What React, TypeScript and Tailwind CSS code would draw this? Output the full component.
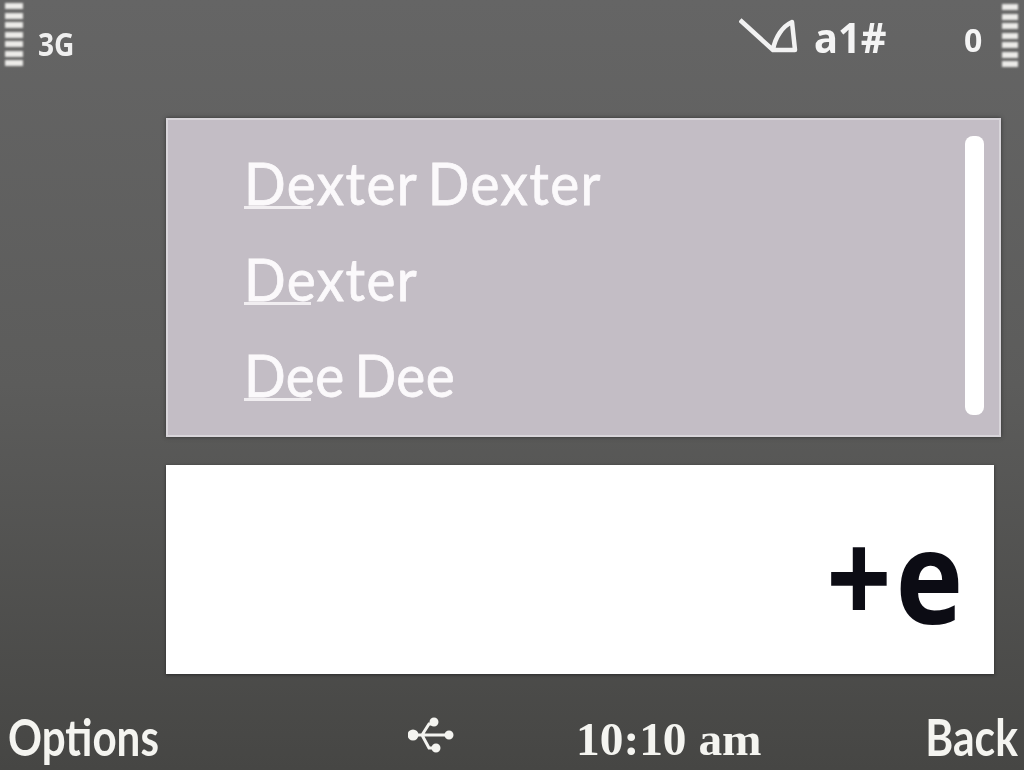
const Bars = ({ className }: { className: string }) => (
  <div className={`flex flex-col gap-[3.5px] ${className}`}>
    {[0, 1, 2, 3, 4, 5, 6].map((i) => (
      <div key={i} className="h-[6px] w-full bg-[#ecebe8] blur-[0.8px]" />
    ))}
  </div>
);

const Row = ({ text, tight }: { text: string; tight?: boolean }) => (
  <div className="relative flex h-[96px] items-center pb-[3px]">
    <span
      className={`origin-left scale-x-[0.93] whitespace-nowrap text-[59px] leading-none text-[#fbf9fb] font-['Lato',sans-serif] blur-[0.6px] [word-spacing:-5px] [-webkit-text-stroke:0.8px_#fbf9fb] ${
        tight ? "tracking-[0.5px]" : "tracking-[1.5px]"
      }`}
    >
      {text}
    </span>
    <div className="absolute left-0 top-[70px] h-[3px] w-[67px] bg-[#f1eef1] blur-[0.5px]" />
  </div>
);

export default function App() {
  return (
    <div className="flex h-[770px] w-[1024px] flex-col overflow-hidden bg-gradient-to-b from-[#656565] via-[#5c5c5b] to-[#464644] font-['Noto_Sans',sans-serif]">
      <div className="flex h-[118px] shrink-0 items-start">
        <Bars className="ml-[5px] mt-[3px] w-[18px]" />
        <span className="ml-[15px] mt-[26px] origin-left scale-x-[0.88] text-[32px] font-bold leading-[36px] text-[#efefef] blur-[0.6px]">
          3G
        </span>
        <svg viewBox="0 0 60 40" className="ml-auto mt-[17px] h-[40px] w-[60px] blur-[0.5px]" fill="none" stroke="#f2f2f2" strokeWidth="4.5" strokeLinejoin="round">
          <path d="M1 3 L 34 33 L 56 33 L 53 5 C 44 9 36 20 34 33" />
        </svg>
        <span className="ml-[15px] mt-[14px] w-[72px] origin-left scale-x-[0.95] whitespace-nowrap text-[42px] font-bold leading-[46px] text-[#f4f4f4] blur-[0.6px]">
          a1#
        </span>
        <span className="ml-[78px] mt-[21px] w-[18px] origin-left text-[32px] font-bold leading-[38px] text-[#f4f4f4] blur-[0.6px]">
          0
        </span>
        <Bars className="ml-[20px] mr-[6px] mt-[4px] w-[16px]" />
      </div>

      <div className="ml-[166px] flex h-[319px] w-[835px] shrink-0 border-2 border-[#d8d5da] bg-[#c3bdc5] pl-[76px] pr-[15px] pt-[16px] shadow-[0_0_4px_#333]">
        <div className="flex-1">
          <Row text="Dexter Dexter" />
          <Row text="Dexter" />
          <Row text="Dee Dee" tight />
        </div>
        <div className="h-[279px] w-[19px] rounded-[8px] bg-white" />
      </div>

      <div className="ml-[166px] mt-[28px] flex h-[209px] w-[828px] shrink-0 items-end justify-end bg-white pb-[50px] pr-[27px] shadow-[0_1px_3px_#2a2a2a]">
        <span className="origin-right scale-x-[0.88] text-[130px] font-bold leading-[100px] tracking-[4px] text-[#0c0c14] blur-[0.6px]">
          +e
        </span>
      </div>

      <div className="flex min-h-0 flex-1 items-start pt-[34px] text-[#f4f4f0]">
        <span className="ml-[8px] w-[360px] origin-left scale-x-[0.826] text-[51px] leading-[58px] font-['Lato',sans-serif] font-bold blur-[0.6px]">
          Options
        </span>
        <svg viewBox="0 0 46 36" className="ml-[40px] mt-[9px] h-[36px] w-[46px] blur-[0.4px]" fill="#f4f4f0" stroke="#f4f4f0" strokeWidth="3">
          <circle cx="5" cy="18" r="4" />
          <circle cx="26" cy="5" r="3" />
          <circle cx="28" cy="31" r="3" />
          <circle cx="41" cy="18" r="3" />
          <path d="M5 18 H42 M14 18 L21 7 H25 M14 18 L21 31 H27" fill="none" />
        </svg>
        <span className="ml-[122px] mt-[6px] w-[300px] origin-left scale-x-[1.03] whitespace-nowrap text-[46px] font-bold leading-[52px] font-['Liberation_Serif',serif] blur-[0.6px]">
          10:10 am
        </span>
        <span className="ml-auto mr-[6px] origin-right scale-x-[0.835] text-[51px] leading-[58px] font-['Lato',sans-serif] font-bold blur-[0.6px]">
          Back
        </span>
      </div>
    </div>
  );
}
